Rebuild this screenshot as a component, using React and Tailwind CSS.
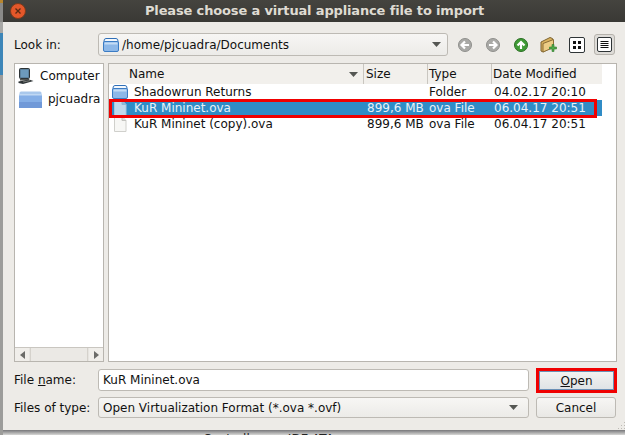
import { useState } from 'react';

const font = 'font-["DejaVu_Sans",sans-serif]';

const FILES = [
  { name: 'Shadowrun Returns', size: '', type: 'Folder', date: '04.02.17 20:10', icon: 'folder' },
  { name: 'KuR Mininet.ova', size: '899,6 MB', type: 'ova File', date: '06.04.17 20:51', icon: 'file', selected: true },
  { name: 'KuR Mininet (copy).ova', size: '899,6 MB', type: 'ova File', date: '06.04.17 20:51', icon: 'file' },
];

function FolderIcon({ size = 16 }) {
  return (
    <svg width={size} height={size} viewBox="0 0 16 16" className="shrink-0">
      <path d="M1 4 Q1 1.5 3 1.5 L13 1.5 Q15 1.5 15 4 L15 6 L1 6 Z" fill="#f4f8fc" stroke="#2f6fb8" />
      <rect x="0.5" y="4.5" width="15" height="10" rx="1.5" fill="#8db8e8" stroke="#3b7cc4" />
      <rect x="1.5" y="5.5" width="13" height="2" fill="#c4dcf5" />
    </svg>
  );
}

function BigFolder() {
  return (
    <svg width="23" height="17" viewBox="0 0 23 17" className="shrink-0">
      <path d="M0.5 2 Q0.5 0.5 2 0.5 L21 0.5 Q22.5 0.5 22.5 2 L22.5 4 L0.5 4 Z" fill="#a9c8ec" />
      <rect x="0" y="3" width="23" height="14" rx="1" fill="#84aee6" />
      <rect x="0" y="3" width="23" height="1.5" fill="#c0d8f3" />
      <rect x="0" y="11" width="23" height="6" fill="#7099d8" />
    </svg>
  );
}

function FileIcon({ selected }) {
  return (
    <svg width="14" height="16" viewBox="0 0 14 16" className="shrink-0">
      <path
        d="M1.5 0.5 L9 0.5 L13 4.5 L13 15.5 L1.5 15.5 Z"
        fill={selected ? '#c0d8ea' : '#f7f7f5'}
        stroke={selected ? '#a8c8de' : '#d0d0cc'}
      />
      <path d="M9 0.5 L9 4.5 L13 4.5" fill={selected ? '#8fb7d4' : '#e0e0dc'} stroke={selected ? '#8fb7d4' : '#c4c4c0'} />
    </svg>
  );
}

function ComputerIcon() {
  return (
    <svg width="16" height="16" viewBox="0 0 16 16" className="shrink-0">
      <rect x="1.5" y="0.5" width="10" height="10" rx="1" fill="#4d6a80" stroke="#2e3436" />
      <rect x="2.5" y="1.5" width="8" height="8" fill="#6d9abb" />
      <path d="M2 11 L11 11 L11 12.5 L2 12.5 Z" fill="#555753" />
      <path d="M0.5 13.5 L11 11.5 L15.5 13 L5 16 L0.5 15 Z" fill="#2e3436" />
      <path d="M5 14 L12 12.6" stroke="#888a85" strokeWidth="0.8" />
    </svg>
  );
}

function NavCircle({ dir, fill, edge }) {
  const d = dir === 'left'
    ? 'M7 3.5 L3.5 7 L7 10.5 M4 7 L11 7'
    : dir === 'right'
      ? 'M7 3.5 L10.5 7 L7 10.5 M3 7 L10 7'
      : 'M3.5 7.5 L7 4 L10.5 7.5 M7 4.5 L7 11';
  return (
    <svg width="14" height="14" viewBox="0 0 14 14">
      <circle cx="7" cy="7" r="6.5" fill={fill} stroke={edge} />
      <path d={d} fill="none" stroke="#ffffff" strokeWidth="2.2" />
    </svg>
  );
}

function NewFolderIcon() {
  return (
    <svg width="17" height="16" viewBox="0 0 17 16">
      <path d="M1 5 L10 0.5 L12.5 1.5 L12.5 10 L3 15 L1 14 Z" fill="#d9b25e" stroke="#7d6330" />
      <path d="M3 6.5 L13.5 2.5 L13.5 10.5 L3 15 Z" fill="#eccd85" stroke="#8a6d35" />
      <path d="M9.5 10 L12 10 L12 7.5 L14 7.5 L14 10 L16.5 10 L16.5 12 L14 12 L14 14.5 L12 14.5 L12 12 L9.5 12 Z" fill="#4fa84a" stroke="#2f7a2c" strokeWidth="0.6" />
    </svg>
  );
}

function IconView() {
  return (
    <svg width="16" height="16" viewBox="0 0 16 16">
      <rect x="0.5" y="0.5" width="15" height="15" rx="1.5" fill="#ffffff" stroke="#2e3436" />
      <rect x="4" y="4" width="3" height="3" fill="#111" />
      <rect x="9" y="4" width="3" height="3" fill="#111" />
      <rect x="4" y="9" width="3" height="3" fill="#111" />
      <rect x="9" y="9" width="3" height="3" fill="#111" />
    </svg>
  );
}

function ListView() {
  return (
    <svg width="15" height="15" viewBox="0 0 15 15">
      <rect x="0.5" y="0.5" width="14" height="14" rx="1.5" fill="#ffffff" stroke="#2e3436" />
      <path d="M3.5 4.5 H11.5 M3.5 6.5 H11.5 M3.5 8.5 H11.5 M3.5 10.5 H11.5" stroke="#111" />
    </svg>
  );
}

function Caret({ color = '#555753' }) {
  return (
    <svg width="9" height="5" viewBox="0 0 9 5" className="shrink-0">
      <path d="M0 0 L9 0 L4.5 5 Z" fill={color} />
    </svg>
  );
}

function ScrollArrow({ left }) {
  return (
    <div className="w-[14px] h-full flex items-center justify-center bg-[#f0eeea]">
      <svg width="5" height="8" viewBox="0 0 5 8">
        <path d={left ? 'M5 0 L0 4 L5 8 Z' : 'M0 0 L5 4 L0 8 Z'} fill="#6b6b68" />
      </svg>
    </div>
  );
}

function HeaderCell({ className, children }) {
  return (
    <div className={`h-full flex items-center border-r border-[#c9c6c0] bg-[#f2f0ec] ${className}`}>
      {children}
    </div>
  );
}

function Row({ file }) {
  const textColor = file.selected ? 'text-[#e8f2f8]' : 'text-[#111]';
  return (
    <div className={`flex items-center h-4 ${file.selected ? 'bg-[#308cc6]' : ''} ${textColor}`}>
      <div className="w-[255px] flex items-center pl-[3px] gap-[6px]">
        <div className="w-4 flex justify-center">
          {file.icon === 'folder' ? <FolderIcon /> : <FileIcon selected={file.selected} />}
        </div>
        <span>{file.name}</span>
      </div>
      <div className="w-[64px] pl-[3px] whitespace-nowrap">{file.size}</div>
      <div className="w-[64px] pl-px">{file.type}</div>
      <div className="w-[110px] pl-[2px]">{file.date}</div>
    </div>
  );
}

export default function App() {
  const [fileName, setFileName] = useState('KuR Mininet.ova');

  return (
    <div className={`w-[625px] h-[435px] overflow-hidden flex bg-[#8a8a88] text-[12px] text-[#111] ${font}`}>
      <div className="w-[3px] shrink-0 flex flex-col bg-[#9c9c9a]">
        <div className="h-[3px] bg-[#b8862e]" />
        <div className="h-[19px] bg-[#8a8a88]" />
        <div className="h-[11px] bg-[#a8a8a6]" />
        <div className="h-[42px] bg-[#3d86b8]" />
      </div>
      <div className="flex-1 flex flex-col">
        <div className="h-[22px] shrink-0 bg-gradient-to-b from-[#45443f] to-[#3a3935] relative flex items-center justify-center">
          <div className="absolute left-[7px] top-[3px] w-4 h-4 rounded-full bg-[#e4572a] border border-[#7c3a1c] flex items-center justify-center">
            <svg width="8" height="8" viewBox="0 0 8 8">
              <path d="M1.5 1.5 L6.5 6.5 M6.5 1.5 L1.5 6.5" stroke="#5a2a12" strokeWidth="1.3" />
            </svg>
          </div>
          <span className="text-[13px] font-bold text-[#dfdbd2] whitespace-nowrap tracking-[-0.15px]">
            Please choose a virtual appliance file to import
          </span>
        </div>

        <div className="h-[408px] shrink-0 bg-[#edebe7] flex flex-col pl-[11px] pr-[9px] pt-[11px] relative">
          <div className="flex items-center h-[23px]">
            <label className="w-[84px]">Look in:</label>
            <div className="w-[350px] h-[23px] rounded-[3px] border border-[#bdbab4] bg-gradient-to-b from-[#f7f6f4] to-[#ecebe8] flex items-center pl-1 pr-[6px] gap-[3px]">
              <FolderIcon />
              <span className="flex-1">/home/pjcuadra/Documents</span>
              <Caret />
            </div>
            <div className="flex items-center ml-[10px]">
              <NavCircle dir="left" fill="#a9a9a6" edge="#8f8f8c" />
              <div className="ml-[14px]"><NavCircle dir="right" fill="#a9a9a6" edge="#8f8f8c" /></div>
              <div className="ml-[14px]"><NavCircle dir="up" fill="#3f9a35" edge="#2a6f24" /></div>
              <div className="ml-[12px] flex"><NewFolderIcon /></div>
              <div className="ml-[12px] flex"><IconView /></div>
              <div className="w-[21px] h-[21px] ml-[9px] flex items-center justify-center rounded-[3px] border border-[#b5b2ac] bg-[#dedcd8]"><ListView /></div>
            </div>
          </div>

          <div className="flex gap-1 h-[299px] mt-[7px] shrink-0">
            <div className="w-[90px] shrink-0 border border-[#b8b5af] bg-white flex flex-col">
              <div className="flex-1 pt-[3px] pl-[3px]">
                <div className="flex items-center gap-[6px] h-[18px]">
                  <ComputerIcon />
                  <span>Computer</span>
                </div>
                <div className="flex items-center gap-[6px] h-[18px] pl-px mt-[5px]">
                  <BigFolder />
                  <span>pjcuadra</span>
                </div>
              </div>
              <div className="h-[14px] flex border-t border-[#c9c6c0] bg-[#e6e4e0]">
                <ScrollArrow left />
                <div className="flex-1 mx-px bg-[#ebe9e5] border-x border-[#d5d2cc]" />
                <ScrollArrow />
              </div>
            </div>

            <div className="flex-1 relative border border-[#b8b5af] bg-white">
              <div className="flex h-[20px] items-center">
                <HeaderCell className="w-[255px] pl-[20px] justify-between pr-[5px]">
                  <span>Name</span>
                  <Caret />
                </HeaderCell>
                <HeaderCell className="w-[64px] pl-[2px]">Size</HeaderCell>
                <HeaderCell className="w-[64px] pl-px">Type</HeaderCell>
                <HeaderCell className="w-[110px] pl-px border-r-0">Date Modified</HeaderCell>
              </div>
              <div className="w-[493px]">
                {FILES.map((file) => <Row key={file.name} file={file} />)}
              </div>
              <div className="absolute left-0 top-[35px] w-[488px] h-[19px] border-[3px] border-[#f00000]" />
            </div>
          </div>

          <div className="flex items-center h-[22px] mt-[7px]">
            <label className="w-[84px]">File <span className="underline">n</span>ame:</label>
            <input
              value={fileName}
              onChange={(e) => setFileName(e.target.value)}
              className="w-[431px] h-[22px] rounded-[3px] border border-[#bdbab4] bg-white px-1 outline-none"
            />
            <div className="ml-[7px] w-[81px] h-[25px] border-[3px] border-[#f00000] flex">
              <button className="flex-1 border border-[#6a8fb5] bg-gradient-to-b from-[#f3f2f0] to-[#dfe3e6]">
                <span className="underline">O</span>pen
              </button>
            </div>
          </div>

          <div className="flex items-center h-[21px] mt-[6px]">
            <label className="w-[84px]">Files of type:</label>
            <div className="w-[431px] h-[21px] rounded-[3px] border border-[#bdbab4] bg-gradient-to-b from-[#f7f6f4] to-[#ecebe8] flex items-center pl-[4px] pr-[10px]">
              <span className="flex-1">Open Virtualization Format (*.ova *.ovf)</span>
              <Caret />
            </div>
            <button className="ml-[7px] w-[80px] h-[21px] rounded-[3px] border border-[#bdbab4] bg-gradient-to-b from-[#f7f6f4] to-[#e9e8e5]">
              Cancel
            </button>
          </div>

          <svg width="9" height="9" viewBox="0 0 9 9" className="absolute right-0 bottom-0">
            <path d="M7 1h1v1H7zM4 4h1v1H4zM7 4h1v1H7zM1 7h1v1H1zM4 7h1v1H4zM7 7h1v1H7z" fill="#bdbab4" />
          </svg>
        </div>

        <div className="flex-1 bg-gradient-to-b from-[#77777a] to-[#d8d8d6] flex gap-[22px] pl-[200px] text-[#222] whitespace-nowrap overflow-hidden">
          <span>Controller:</span>
          <span>IDE ATA</span>
        </div>
      </div>
    </div>
  );
}
